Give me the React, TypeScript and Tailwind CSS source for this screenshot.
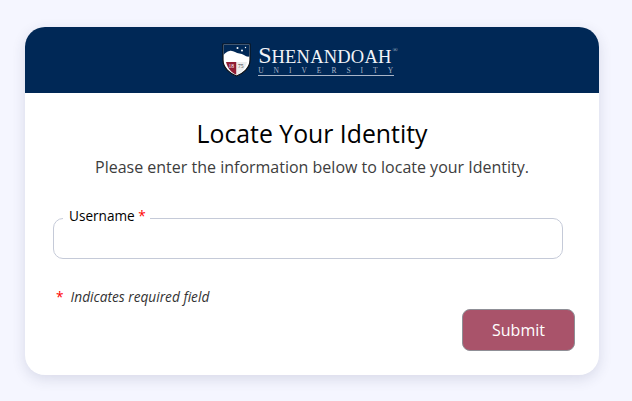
export default function App() {
  return (
    <div className="w-[632px] h-[401px] bg-[#f5f6ff] pt-[27px] pl-[25px] font-['Open_Sans',sans-serif] overflow-hidden">
      <div className="w-[574px] h-[348px] bg-white rounded-[20px] shadow-[0_4px_14px_rgba(40,50,90,0.14)] overflow-hidden flex flex-col">
        <header className="h-[66px] bg-[#002856] flex items-center justify-center shrink-0">
          <div className="flex items-center gap-[7px] ml-[-4px]">
            <svg width="29" height="34" viewBox="0 0 29 34" aria-hidden="true">
              <path d="M1 1H28V17C28 25 21 30.5 14.5 33C8 30.5 1 25 1 17Z" fill="#fff" stroke="#0d1116" strokeWidth="1.2" />
              <path d="M1.6 1.6H27.4V13.5C24 14.5 21 10.5 17.5 10.5C13.5 10.5 11.5 7 7.5 8C5 8.6 3.2 10 1.6 12Z" fill="#002856" />
              <path d="M4 19H14.5V31.8C10 30 5.5 25.5 4 19Z" fill="#8f1d33" />
              <path d="M14.5 19H25C23.5 25.5 19 30 14.5 31.8Z" fill="#ececec" />
              <text x="6.5" y="25" fontSize="5.5" fill="#fff" fontFamily="Liberation Serif, serif">18</text>
              <text x="16" y="25" fontSize="5.5" fill="#333" fontFamily="Liberation Serif, serif">75</text>
              <circle cx="15.5" cy="5" r="1" fill="#fff" />
              <circle cx="20" cy="7.5" r="1" fill="#fff" />
              <circle cx="23.5" cy="4.5" r="0.7" fill="#fff" />
            </svg>
            <div className="flex flex-col text-[#f2f4f8] font-['Liberation_Serif',serif]">
              <div className="flex items-baseline leading-[22px] h-[23px] whitespace-nowrap">
                <span className="text-[24px]">S</span>
                <span className="text-[18.5px] tracking-[0.2px]">HENANDOAH</span>
                <span className="text-[7px] ml-[1px] self-start mt-[2px] leading-[8px] text-[#aab5c8]">®</span>
              </div>
              <div className="w-[136px] border-b border-[#aab5c8] flex justify-between text-[7.5px] leading-[8px] h-[9px] text-[#aab5c8] pr-[1px]">
                {"UNIVERSITY".split("").map((c, i) => (
                  <span key={i}>{c}</span>
                ))}
              </div>
            </div>
          </div>
        </header>
        <main className="flex-1 px-[28px] relative">
          <h1 className="text-[24.8px] leading-[32px] text-black text-center mt-[24px]">Locate Your Identity</h1>
          <p className="text-[16px] leading-[22px] text-[#3d3d3d] text-center mt-[7px]">
            Please enter the information below to locate your Identity.
          </p>
          <fieldset className="mt-[29px] w-[510px] h-[52px] border border-[#c5cad8] rounded-[10px] px-[9px]">
            <legend className="pl-[6px] pr-[4px] pb-[6px] text-[13.6px] leading-[17px] text-black">
              Username <span className="text-[#ff0000]">*</span>
            </legend>
          </fieldset>
          <p className="mt-[29px] ml-[3px] text-[13.7px] leading-[18px] italic text-[#333]">
            <span className="text-[#ff0000] not-italic mr-[7px]">*</span>Indicates required field
          </p>
          <div className="flex justify-end mr-[-4px] mt-[3px]">
            <button className="w-[113px] h-[42px] rounded-[8px] bg-[#a9536a] border border-[#8f8f96] text-white text-[16px]">
              Submit
            </button>
          </div>
        </main>
      </div>
    </div>
  );
}
